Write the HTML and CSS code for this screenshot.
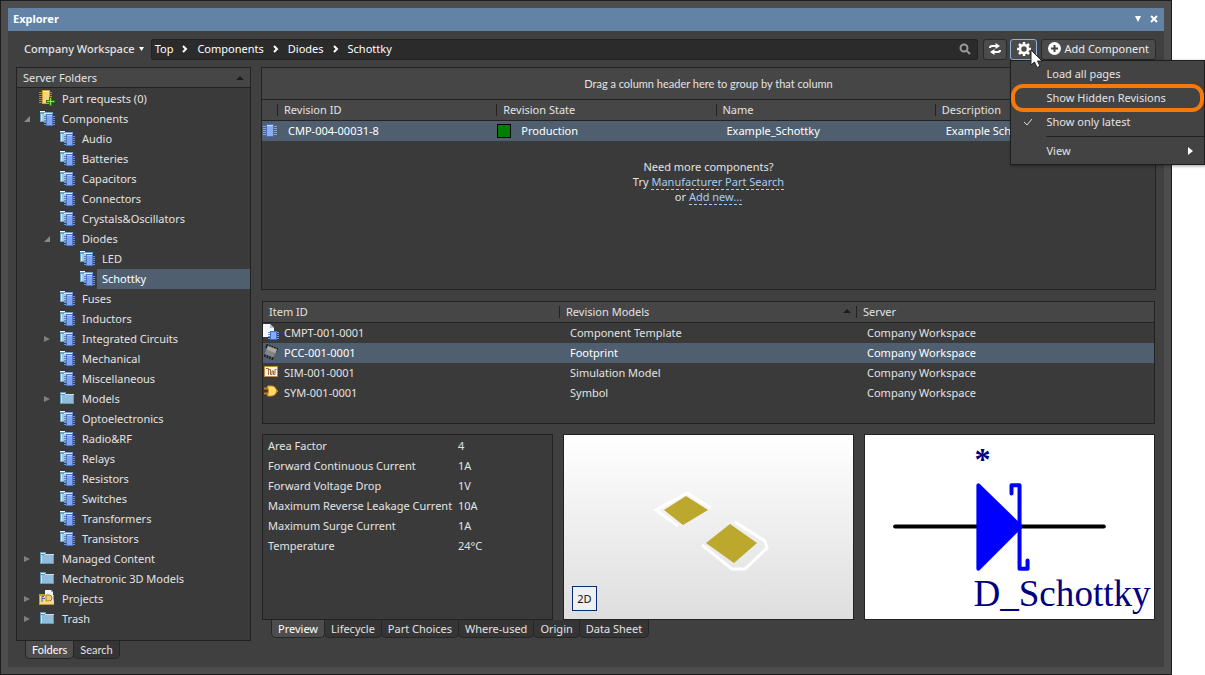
FILE: index.html
```html
<!DOCTYPE html>
<html lang="en">
<head>
    <meta charset="UTF-8">
    <meta name="viewport" content="width=device-width, initial-scale=1.0">
    <title>Explorer</title>
    <link rel="stylesheet" href="styles.css">
</head>
<body>
    <!-- Shared icons -->
    <svg class="defs" width="0" height="0" aria-hidden="true">
        <symbol id="icon-folder" viewBox="0 0 16 16">
            <path d="M1 2h6v2h8v10H1z" fill="#5d9dbb"/>
            <path d="M2 3h4v1H2z" fill="#e8f6fc"/>
            <path d="M2 5h12v8H2z" fill="#92bddb"/>
            <path d="M6 4h9v1H6zM2 5h1v8H2z" fill="#c5e3ef"/>
        </symbol>
        <symbol id="icon-comp" viewBox="0 0 16 16">
            <path d="M1 1h5v1h8v10H1z" fill="#6da3c4"/>
            <path d="M1 1h5v1H1z" fill="#f0fafe"/>
            <path d="M2 4h11v7H2z" fill="#a9c9dd"/>
            <path d="M5 3h8v1H5zM2 4h1v7H2z" fill="#d6edf7"/>
            <path d="M5 6.500h2M5 8.500h2M5 10.500h2" stroke="#6488b0"/>
            <path d="M14 6.500h2M14 8.500h2M14 10.500h2M14 12.500h2M14 14.500h2M5 12.500h2M5 14.500h2" stroke="#7a93b8"/>
            <path d="M7 4h7v12H7z" fill="#4d76c8"/>
            <path d="M8 5h5v10H8z" fill="#82a6f4"/>
            <path d="M8 5h5v1H8z" fill="#b9d0ff"/>
        </symbol>
        <symbol id="icon-request" viewBox="0 0 16 16">
            <path d="M0 2.500h13M0 4.500h13M0 6.500h13M0 8.500h13M0 10.500h13M0 12.500h8" stroke="#a5874b"/>
            <path d="M3 0h8v14H3z" fill="#d99c38"/>
            <path d="M4 1h6v12H4z" fill="#f9d582"/>
            <path d="M4 1h6v1H4z" fill="#fff2c4"/>
            <path d="M10 7h3v3h3v3h-3v3h-3v-3H7v-3h3z" fill="#2d7a12"/>
            <path d="M11 8h1v3h3v1h-3v3h-1v-3H8v-1h3z" fill="#80ef45"/>
        </symbol>
        <symbol id="icon-projects" viewBox="0 0 16 16">
            <path d="M0 4h5l1 1h9v10H0z" fill="#c99740"/>
            <path d="M1 6h13v8H1z" fill="#f3d993"/>
            <path d="M6 0h6l2 2v9H6z" fill="#eef4fa"/>
            <path d="M12 0v2h2z" fill="#9dafc4"/>
            <path d="M5 6.500H3V12M3 8.500h3" stroke="#3e68b0" fill="none"/>
            <path d="M7 5h3a3 3 0 0 1 0 6H7z" fill="#f4cf64" stroke="#a67724"/>
            <path d="M4 12l10-1 1-1v4H4z" fill="#f3d993"/>
        </symbol>
        <symbol id="icon-chip" viewBox="0 0 16 16">
            <path d="M1 3.500h14M1 5.500h14M1 7.500h14M1 9.500h14M1 11.500h14" stroke="#90a6c9"/>
            <path d="M4 1h8v13H4z" fill="#4570cb"/>
            <path d="M5 2h6v11H5z" fill="#8aadf7"/>
            <path d="M5 2h6v1H5z" fill="#d2e0ff"/>
        </symbol>
        <symbol id="icon-template" viewBox="0 0 16 16">
            <path d="M0 0h7l4 4v9H0z" fill="#f5f8fd"/>
            <path d="M7 0v4h4z" fill="#aebfdb"/>
            <path d="M5 8.500h11M5 10.500h11M5 12.500h11M5 14.500h11" stroke="#7c98cc"/>
            <path d="M7 7h7v9H7z" fill="#3f6fd0"/>
            <path d="M8 8h5v7H8z" fill="#86abfa"/>
        </symbol>
        <symbol id="icon-footprint" viewBox="0 0 16 16">
            <path d="M4.500 0L3 4M7 1L5.500 5M9.500 2L8 6M12 3l-1.500 4M14.500 4L13 8M3 9l-1.500 4M5.500 10L4 14M8 11l-1.500 4M10.500 12L9 16" stroke="#1b1b1b" stroke-width="1.500"/>
            <path d="M5 2l9 3.500-3.500 8L1.500 10z" fill="#858585"/>
            <path d="M5 2l9 3.500-1.500 3.500-9-3.500z" fill="#aaa7a4"/>
        </symbol>
        <symbol id="icon-sim" viewBox="0 0 16 16">
            <path d="M1.500 2.500h13v10h-13z" fill="#fff5e6" stroke="#c8863c"/>
            <path d="M3 4.500h2.500v6M5.500 10.500V5.500h2v5h1.500V7h1.500v3.500H12v-5h1.500" fill="none" stroke="#9c6a38"/>
        </symbol>
        <symbol id="icon-symbol" viewBox="0 0 16 16">
            <path d="M1 4.500h5M1 9.500h5M12 7h3" stroke="#c77a1b" stroke-width="2"/>
            <path d="M4.500 2h4a5 5 0 0 1 0 10h-4q2-5 0-10z" fill="#ffe066" stroke="#d18a22"/>
        </symbol>
        <symbol id="icon-open" viewBox="0 0 8 8"><path d="M7 1v6H1z" fill="#8a8a8a"/></symbol>
        <symbol id="icon-closed" viewBox="0 0 8 8"><path d="M1 1l6 3-6 3z" fill="#808080"/></symbol>
        <symbol id="icon-sort" viewBox="0 0 8 8"><path d="M0 6l4-4 4 4z" fill="#1d1d1d"/></symbol>
        <symbol id="icon-crumb" viewBox="0 0 8 8"><path d="M2 1l3 3-3 3" fill="none" stroke="#fff" stroke-width="2"/></symbol>
    </svg>

    <div class="window">
        <header class="titlebar">
            <h1>Explorer</h1>
            <button class="title-btn" aria-label="Window menu"><svg width="8" height="8" viewBox="0 0 8 8"><path d="M1 1h6L4 7z" fill="#fff"/></svg></button>
            <button class="title-btn" aria-label="Close"><svg width="8" height="8" viewBox="0 0 8 8"><path d="M1 1l6 6M7 1L1 7" stroke="#fff" stroke-width="2"/></svg></button>
        </header>

        <!-- Toolbar -->
        <div class="toolbar">
            <button class="workspace">Company Workspace <svg width="5" height="4" viewBox="0 0 5 4"><path d="M0 0h5L2.500 4z" fill="#fff"/></svg></button>
            <nav class="crumbs" aria-label="Path">
                <a href="#">Top</a>
                <svg width="8" height="8"><use href="#icon-crumb"/></svg>
                <a href="#">Components</a>
                <svg width="8" height="8"><use href="#icon-crumb"/></svg>
                <a href="#">Diodes</a>
                <svg width="8" height="8"><use href="#icon-crumb"/></svg>
                <a href="#">Schottky</a>
                <button class="search" aria-label="Search"><svg width="12" height="12" viewBox="0 0 12 12"><circle cx="5" cy="5" r="3.500" fill="none" stroke="#9a9a9a" stroke-width="2"/><path d="M7.500 7.500l3.500 3.500" stroke="#9a9a9a" stroke-width="2"/></svg></button>
            </nav>
            <button class="tool-btn refresh" aria-label="Refresh"><svg width="12" height="12" viewBox="0 0 12 12"><path d="M1 5q0-2 2-2h5M11 7q0 2-2 2H4" fill="none" stroke="#fff" stroke-width="2"/><path d="M6.500 0L11 3 6.500 6zM5.500 6v6L1 9z" fill="#fff"/></svg></button>
            <div class="menu-wrap">
                <button class="tool-btn gear" aria-label="Settings"><svg width="14" height="14" viewBox="0 0 14 14"><circle cx="7" cy="7" r="4" fill="none" stroke="#fff" stroke-width="2.500"/><path d="M7 0v3M7 11v3M0 7h3M11 7h3M2 2l2 2M10 10l2 2M12 2l-2 2M4 10l-2 2" stroke="#fff" stroke-width="2.500"/></svg></button>
                <div class="menu">
                    <button>Load all pages</button>
                    <button class="ringed">Show Hidden Revisions</button>
                    <button><svg class="check" width="10" height="8" viewBox="0 0 10 8"><path d="M1 4l3 3 5-6" fill="none" stroke="#e0e0e0"/></svg>Show only latest</button>
                    <hr>
                    <button>View<svg class="sub" width="5" height="8" viewBox="0 0 5 8"><path d="M0 0l5 4-5 4z" fill="#fff"/></svg></button>
                </div>
                <svg class="cursor" width="13" height="20" viewBox="0 0 13 20"><path d="M1 1v15l3.500-3 2.500 5.500 3-1.300-2.500-5.200h4.500z" fill="#fff" stroke="#222"/></svg>
            </div>
            <button class="tool-btn add"><svg width="13" height="13" viewBox="0 0 13 13"><circle cx="6.500" cy="6.500" r="6.500" fill="#fff"/><path d="M6.500 3v7M3 6.500h7" stroke="#444" stroke-width="2"/></svg>Add Component</button>
        </div>

        <div class="content">
            <!-- Folder tree -->
            <aside class="sidebar">
                <div class="tree-panel">
                    <h2>Server Folders <svg width="8" height="8"><use href="#icon-sort"/></svg></h2>
                    <ul class="tree">
                        <li><div class="node"><i></i><svg><use href="#icon-request"/></svg><span>Part requests (0)</span></div></li>
                        <li><div class="node"><i><svg><use href="#icon-open"/></svg></i><svg><use href="#icon-comp"/></svg><span>Components</span></div>
                            <ul>
                                <li><div class="node"><i></i><svg><use href="#icon-comp"/></svg><span>Audio</span></div></li>
                                <li><div class="node"><i></i><svg><use href="#icon-comp"/></svg><span>Batteries</span></div></li>
                                <li><div class="node"><i></i><svg><use href="#icon-comp"/></svg><span>Capacitors</span></div></li>
                                <li><div class="node"><i></i><svg><use href="#icon-comp"/></svg><span>Connectors</span></div></li>
                                <li><div class="node"><i></i><svg><use href="#icon-comp"/></svg><span>Crystals&amp;Oscillators</span></div></li>
                                <li><div class="node"><i><svg><use href="#icon-open"/></svg></i><svg><use href="#icon-comp"/></svg><span>Diodes</span></div>
                                    <ul>
                                        <li><div class="node"><i></i><svg><use href="#icon-comp"/></svg><span>LED</span></div></li>
                                        <li><div class="node selected"><i></i><svg><use href="#icon-comp"/></svg><span>Schottky</span></div></li>
                                    </ul>
                                </li>
                                <li><div class="node"><i></i><svg><use href="#icon-comp"/></svg><span>Fuses</span></div></li>
                                <li><div class="node"><i></i><svg><use href="#icon-comp"/></svg><span>Inductors</span></div></li>
                                <li><div class="node"><i><svg><use href="#icon-closed"/></svg></i><svg><use href="#icon-comp"/></svg><span>Integrated Circuits</span></div></li>
                                <li><div class="node"><i></i><svg><use href="#icon-comp"/></svg><span>Mechanical</span></div></li>
                                <li><div class="node"><i></i><svg><use href="#icon-comp"/></svg><span>Miscellaneous</span></div></li>
                                <li><div class="node"><i><svg><use href="#icon-closed"/></svg></i><svg><use href="#icon-folder"/></svg><span>Models</span></div></li>
                                <li><div class="node"><i></i><svg><use href="#icon-comp"/></svg><span>Optoelectronics</span></div></li>
                                <li><div class="node"><i></i><svg><use href="#icon-comp"/></svg><span>Radio&amp;RF</span></div></li>
                                <li><div class="node"><i></i><svg><use href="#icon-comp"/></svg><span>Relays</span></div></li>
                                <li><div class="node"><i></i><svg><use href="#icon-comp"/></svg><span>Resistors</span></div></li>
                                <li><div class="node"><i></i><svg><use href="#icon-comp"/></svg><span>Switches</span></div></li>
                                <li><div class="node"><i></i><svg><use href="#icon-comp"/></svg><span>Transformers</span></div></li>
                                <li><div class="node"><i></i><svg><use href="#icon-comp"/></svg><span>Transistors</span></div></li>
                            </ul>
                        </li>
                        <li><div class="node"><i><svg><use href="#icon-closed"/></svg></i><svg><use href="#icon-folder"/></svg><span>Managed Content</span></div></li>
                        <li><div class="node"><i></i><svg><use href="#icon-folder"/></svg><span>Mechatronic 3D Models</span></div></li>
                        <li><div class="node"><i><svg><use href="#icon-closed"/></svg></i><svg><use href="#icon-projects"/></svg><span>Projects</span></div></li>
                        <li><div class="node"><i><svg><use href="#icon-closed"/></svg></i><svg><use href="#icon-folder"/></svg><span>Trash</span></div></li>
                    </ul>
                </div>
                <div class="tabs narrow">
                    <button class="active">Folders</button>
                    <button>Search</button>
                </div>
            </aside>

            <main class="main">
                <!-- Revisions -->
                <section class="panel revisions">
                    <div class="group-bar narrow">Drag a column header here to group by that column</div>
                    <table>
                        <colgroup><col class="col-icon"><col><col><col><col></colgroup>
                        <thead>
                            <tr><th></th><th>Revision ID</th><th>Revision State</th><th>Name</th><th>Description</th></tr>
                        </thead>
                        <tbody>
                            <tr class="selected">
                                <td class="icon"><svg width="16" height="16"><use href="#icon-chip"/></svg></td>
                                <td>CMP-004-00031-8</td>
                                <td class="state"><div><b></b>Production</div></td>
                                <td>Example_Schottky</td>
                                <td>Example Schottky</td>
                            </tr>
                        </tbody>
                    </table>
                    <p class="more">Need more components?<br>Try <a href="#">Manufacturer Part Search</a><br>or <a href="#">Add new...</a></p>
                </section>

                <div class="lower">
                    <!-- Models -->
                    <section class="panel models">
                        <table>
                            <thead>
                                <tr><th>Item ID</th><th>Revision Models <svg width="8" height="8"><use href="#icon-sort"/></svg></th><th>Server</th></tr>
                            </thead>
                            <tbody>
                                <tr><td class="item"><div><svg><use href="#icon-template"/></svg>CMPT-001-0001</div></td><td>Component Template</td><td>Company Workspace</td></tr>
                                <tr class="selected"><td class="item"><div><svg><use href="#icon-footprint"/></svg>PCC-001-0001</div></td><td>Footprint</td><td>Company Workspace</td></tr>
                                <tr><td class="item"><div><svg><use href="#icon-sim"/></svg>SIM-001-0001</div></td><td>Simulation Model</td><td>Company Workspace</td></tr>
                                <tr><td class="item"><div><svg><use href="#icon-symbol"/></svg>SYM-001-0001</div></td><td>Symbol</td><td>Company Workspace</td></tr>
                            </tbody>
                        </table>
                    </section>

                    <!-- Preview -->
                    <section class="previews">
                        <dl class="panel params">
                            <dt>Area Factor</dt><dd>4</dd>
                            <dt>Forward Continuous Current</dt><dd>1A</dd>
                            <dt>Forward Voltage Drop</dt><dd>1V</dd>
                            <dt>Maximum Reverse Leakage Current</dt><dd>10A</dd>
                            <dt>Maximum Surge Current</dt><dd>1A</dd>
                            <dt>Temperature</dt><dd>24°C</dd>
                        </dl>
                        <div class="panel view footprint">
                            <svg viewBox="0 0 289 184">
                                <g fill="none" stroke="#fff" stroke-width="3">
                                    <path d="M114 91L92 75l31-17 24 15"/>
                                    <path d="M171 87l30 19 2 7-22 21h-13l-30-24"/>
                                </g>
                                <path d="M122 61l22 14-25 15-19-15z" fill="#bba82c"/>
                                <path d="M166 89l27 19-23 20-28-20z" fill="#bba82c"/>
                            </svg>
                            <button class="mode">2D</button>
                        </div>
                        <div class="panel view symbol">
                            <svg viewBox="0 0 288 183">
                                <path d="M30 91h208" stroke="#000" stroke-width="4" stroke-linecap="round"/>
                                <path d="M113 50v83l42-42z" fill="#00f" stroke="#00f" stroke-width="4" stroke-linejoin="round"/>
                                <path d="M146 58V50h8v83h8v-8" fill="none" stroke="#00f" stroke-width="4" stroke-linecap="round" stroke-linejoin="round"/>
                                <text class="star" x="109" y="35" font-size="32">*</text>
                                <text x="108" y="170" font-size="37">D_Schottky</text>
                            </svg>
                        </div>
                    </section>
                </div>
                <div class="tabs">
                    <button class="active">Preview</button>
                    <button>Lifecycle</button>
                    <button>Part Choices</button>
                    <button>Where-used</button>
                    <button>Origin</button>
                    <button>Data Sheet</button>
                </div>
            </main>
        </div>
    </div>
</body>
</html>
```
FILE: styles.css
```css
* {
    box-sizing: border-box;
}

body {
    margin: 0;
    padding-right: 33px;
    background: #fff;
    color: #e3e3e3;
    font: 11px/20px "Noto Sans", sans-serif;
}

h1, h2, ul, dl, dd, p {
    margin: 0;
    padding: 0;
    list-style: none;
}

button {
    font: inherit;
    color: inherit;
    background: none;
    border: none;
    padding: 0;
}

a {
    color: inherit;
    text-decoration: none;
}

svg {
    display: block;
    flex: none;
}

.defs {
    position: absolute;
}

.narrow {
    font-family: Lato, sans-serif;
}

.window {
    display: flex;
    flex-direction: column;
    min-height: 100vh;
    border: 1px solid #1c1c1c;
    outline: 7px solid #4d4d4d;
    outline-offset: -8px;
    padding: 7px;
    background: #404040;
}

.titlebar {
    display: flex;
    align-items: center;
    gap: 8px;
    height: 23px;
    padding: 0 6px 2px 5px;
    background: #6283a5;
    color: #fff;
    z-index: 1;
}

.titlebar h1 {
    flex: 1;
    font-size: 11px;
    font-weight: bold;
}

/* Toolbar */
.toolbar {
    display: flex;
    height: 21px;
    margin: 8px 8px 7px 16px;
}

.workspace {
    display: flex;
    align-items: center;
    gap: 4px;
    margin-right: 7px;
    padding-bottom: 2px;
    font-weight: 500;
}

.crumbs {
    display: flex;
    flex: 1;
    align-items: center;
    gap: 8px;
    margin-right: 5px;
    padding: 0 6px 2px 3px;
    background: #2b2b2b;
    border: 1px solid #222;
    border-radius: 2px;
    color: #fff;
}

.search {
    margin-left: auto;
}

.tool-btn {
    display: flex;
    align-items: center;
    justify-content: center;
    gap: 3px;
    height: 21px;
    padding-bottom: 2px;
    background: #4b4b4b;
    border: 1px solid #2a2a2a;
    border-radius: 3px;
    color: #eee;
}

.refresh {
    width: 24px;
    margin-right: 3px;
}

.menu-wrap {
    position: relative;
    z-index: 2;
    margin-right: 4px;
}

.gear {
    width: 27px;
    border-color: #8fb4dc;
}

.add {
    padding: 0 6px 2px;
}

.menu {
    position: absolute;
    top: 21px;
    left: 0;
    width: 195px;
    padding: 1px 0;
    background: #434343;
    border: 1px solid #1e1e1e;
    box-shadow: 1px 1px 3px rgba(0, 0, 0, 0.4);
}

.menu button {
    display: block;
    position: relative;
    width: 100%;
    height: 24px;
    padding-left: 35px;
    text-align: left;
}

.menu .ringed::after {
    content: "";
    position: absolute;
    inset: -2px 0;
    border: 4px solid #f47a0c;
    border-radius: 12px;
}

.menu hr {
    margin: 2px 0 2px 35px;
    border: none;
    border-top: 1px solid #222;
}

.check {
    position: absolute;
    top: 8px;
    left: 12px;
}

.sub {
    position: absolute;
    top: 8px;
    right: 11px;
}

.cursor {
    position: absolute;
    top: 10px;
    left: 20px;
}

/* Layout */
.content {
    display: flex;
    flex: 1;
    gap: 10px;
    padding: 0 8px;
}

.sidebar {
    display: flex;
    flex-direction: column;
    width: 235px;
    margin-bottom: 8px;
}

.tree-panel {
    flex: 1;
    background: #3a3a3a;
    border: 1px solid #222;
}

.tree-panel h2 {
    display: flex;
    align-items: center;
    justify-content: space-between;
    height: 20px;
    margin-bottom: 1px;
    padding: 0 6px;
    background: #464646;
    border-bottom: 1px solid #222;
    font-size: 11px;
    font-weight: normal;
}

.tree {
    padding-left: 6px;
}

.tree ul {
    padding-left: 20px;
}

.node {
    display: flex;
    align-items: center;
    height: 20px;
}

.node i {
    width: 16px;
}

.node i svg {
    width: 8px;
    height: 8px;
}

.node > svg,
.item svg {
    width: 16px;
    height: 16px;
    margin-bottom: 2px;
}

.node span {
    flex: 1;
    margin-left: 2px;
    padding-left: 5px;
}

.selected {
    color: #fff;
}

.node.selected span,
tr.selected {
    background: #4f5f6f;
}

.main {
    display: flex;
    flex: 1;
    flex-direction: column;
    min-width: 0;
    margin-bottom: 29px;
}

.panel {
    background: #3a3a3a;
    border: 1px solid #222;
}

/* Tables */
table {
    width: 100%;
    table-layout: fixed;
    border-collapse: collapse;
}

.col-icon {
    width: 16px;
}

th {
    height: 20px;
    padding: 0 6px;
    background: linear-gradient(#222, #222) right center / 1px 12px no-repeat #464646;
    border-bottom: 1px solid #222;
    font-weight: normal;
    line-height: 19px;
    text-align: left;
}

th:last-child {
    background: #464646;
}

th svg {
    float: right;
    margin: 5px 0 0;
}

td {
    height: 20px;
    padding: 0 10px;
    white-space: nowrap;
    overflow: hidden;
}

td.icon {
    padding: 0;
}

.state div,
.item div {
    display: flex;
    align-items: center;
}

td.state {
    padding-left: 0;
}

.state b {
    width: 14px;
    height: 14px;
    margin-right: 10px;
    background: #008000;
    border: 1px solid #000;
}

td.item {
    padding-left: 0;
}

.item svg {
    margin-right: 5px;
}

.revisions {
    flex: 1;
}

.group-bar {
    height: 32px;
    background: #464646;
    border-bottom: 1px solid #222;
    line-height: 31px;
    text-align: center;
}

.more {
    padding-top: 18px;
    line-height: 15px;
    text-align: center;
}

.more a {
    color: #a3cdf5;
    border-bottom: 1px dashed #a3cdf5;
}

.lower {
    display: flex;
    flex-direction: column;
    gap: 10px;
    margin: 11px 1px 0;
}

.models {
    height: 123px;
}

.previews {
    display: grid;
    grid-template-columns: repeat(3, 1fr);
    gap: 10px;
}

.params {
    display: grid;
    grid-template-columns: 190px 1fr;
    align-content: start;
    height: 186px;
    padding: 1px 5px;
}

.view {
    position: relative;
}

.view svg {
    width: 100%;
    height: 100%;
}

.footprint {
    background: linear-gradient(#fff, #dedede);
}

.mode {
    position: absolute;
    left: 8px;
    bottom: 8px;
    width: 25px;
    height: 25px;
    background: #f0f0f0;
    border: 1px solid #0a2a78;
    color: #111;
}

.symbol {
    background: #fff;
}

.symbol text {
    fill: #000080;
    font-family: "Liberation Serif", serif;
}

.symbol .star {
    font-weight: bold;
}

/* Tabs */
.tabs {
    display: flex;
    padding-left: 10px;
}

.sidebar .tabs {
    padding-left: 9px;
}

.tabs button {
    height: 18px;
    padding: 0 6px;
    background: #353535;
    border: 1px solid #262626;
    border-top: none;
    border-radius: 0 0 5px 5px;
    line-height: 17px;
}

.tabs button + button {
    margin-left: -1px;
}

.tabs .active {
    background: #4d4d4d;
    color: #fff;
}
```
